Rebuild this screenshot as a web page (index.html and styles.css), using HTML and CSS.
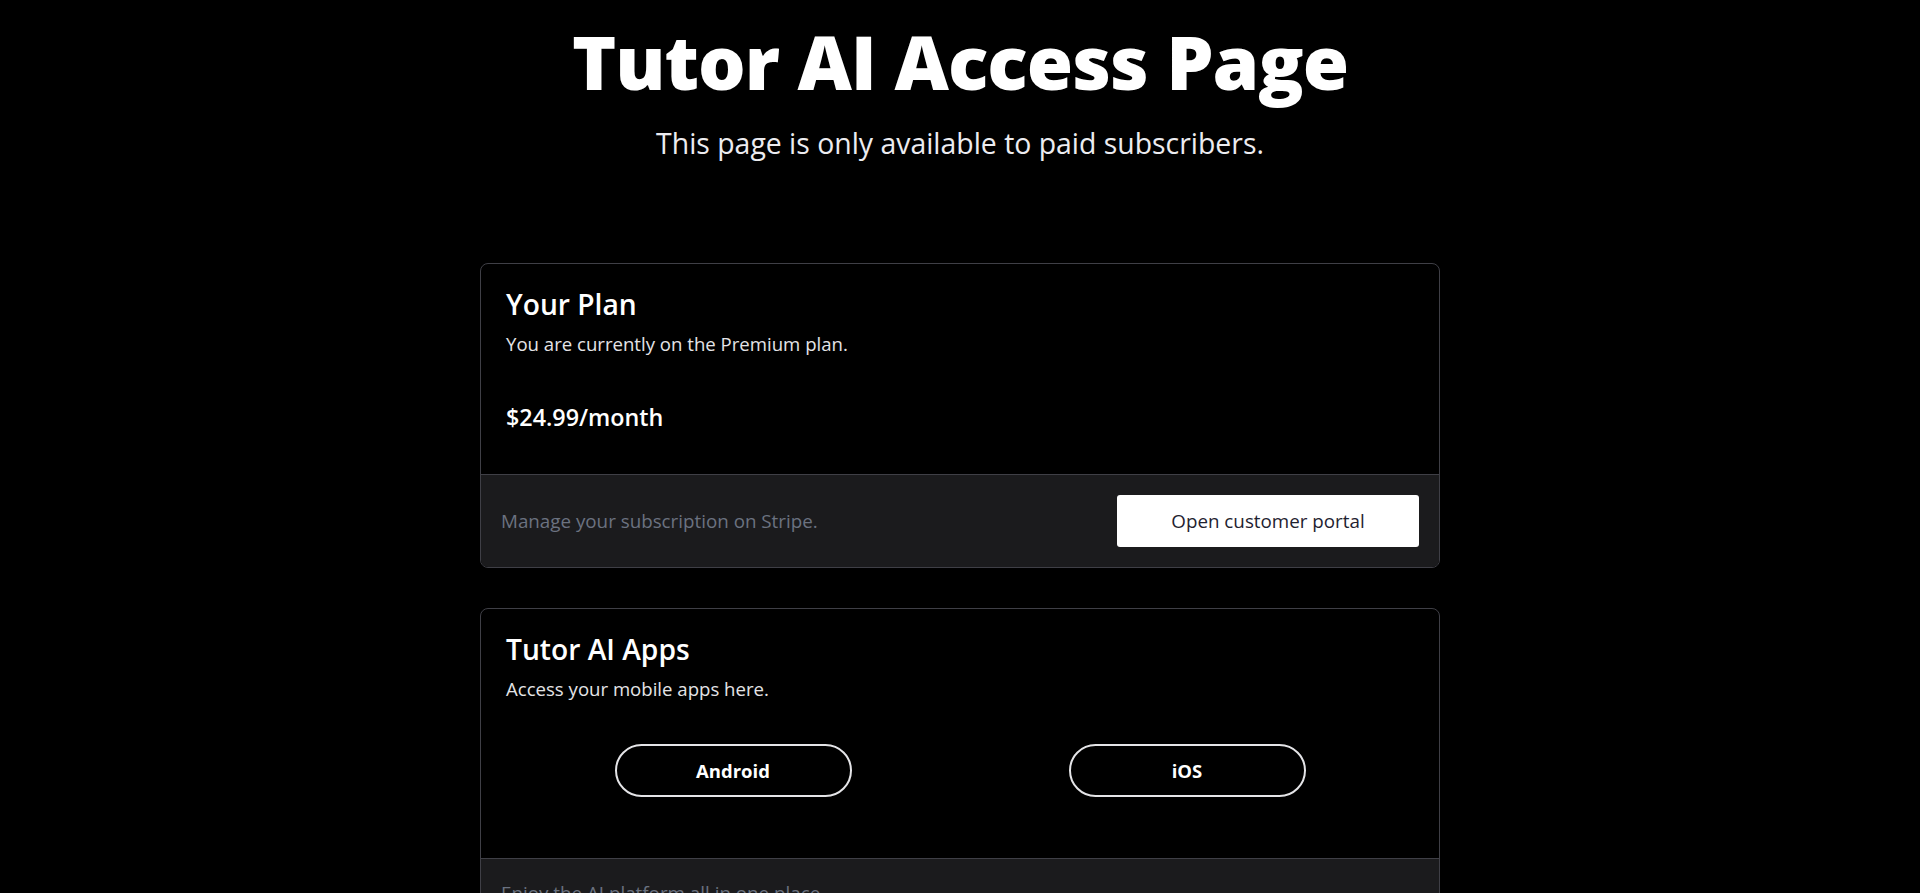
FILE: index.html
```html
<!DOCTYPE html>
<html lang="en">
<head>
<meta charset="utf-8">
<title>Tutor AI Access Page</title>
<link rel="stylesheet" href="styles.css">
</head>
<body>
<main class="page">
  <header class="hero">
    <h1 class="title">Tutor AI Access Page</h1>
    <p class="subtitle">This page is only available to paid subscribers.</p>
  </header>

  <section class="card">
    <div class="card-body">
      <h2 class="card-title">Your Plan</h2>
      <p class="card-desc">You are currently on the Premium plan.</p>
      <p class="price">$24.99/month</p>
    </div>
    <div class="card-footer">
      <span class="footer-text">Manage your subscription on Stripe.</span>
      <button class="portal-btn" type="button">Open customer portal</button>
    </div>
  </section>

  <section class="card">
    <div class="card-body">
      <h2 class="card-title">Tutor AI Apps</h2>
      <p class="card-desc">Access your mobile apps here.</p>
      <div class="apps">
        <div class="app-cell"><button class="pill-btn" type="button">Android</button></div>
        <div class="app-cell"><button class="pill-btn" type="button">iOS</button></div>
      </div>
    </div>
    <div class="card-footer">
      <span class="footer-text">Enjoy the AI platform all in one place.</span>
    </div>
  </section>
</main>
</body>
</html>
```

FILE: styles.css
```css
* { box-sizing: border-box; }

html, body {
  margin: 0;
  padding: 0;
  background: #000;
}

body {
  font-family: "Open Sans", "Noto Sans", "Liberation Sans", sans-serif;
  color: #fff;
}

.page {
  display: flex;
  flex-direction: column;
  align-items: center;
  padding-top: 24px;
}

.hero {
  display: flex;
  flex-direction: column;
  align-items: center;
}

.title {
  margin: 0;
  font-size: 75px;
  line-height: 75px;
  font-weight: 800;
  color: #fff;
  letter-spacing: -1px;
}

.subtitle {
  margin: 24px 0 0;
  font-size: 28.4px;
  line-height: 40px;
  font-weight: 400;
  color: #ececf0;
}

.card {
  width: 960px;
  border: 1px solid #3f3f46;
  border-radius: 8px;
  background: #000;
  overflow: hidden;
  margin-top: 100px;
}

.card + .card {
  margin-top: 40px;
}

.card-body {
  padding: 20px 25px 41px;
}

.card-title {
  margin: 0;
  font-size: 28.2px;
  line-height: 40px;
  font-weight: 600;
  color: #fff;
}

.card-desc {
  margin: 6px 0 0;
  font-size: 18.6px;
  line-height: 28px;
  color: #e4e4e7;
}

.price {
  margin: 43px 0 0;
  font-size: 23.3px;
  line-height: 32px;
  font-weight: 600;
  color: #fff;
}

.card-footer {
  display: flex;
  align-items: center;
  justify-content: space-between;
  padding: 20px 20px;
  background: #1b1b1d;
  border-top: 1px solid #3f3f46;
}

.footer-text {
  font-size: 18.8px;
  line-height: 28px;
  color: #6b7280;
}

.portal-btn {
  width: 302px;
  height: 52px;
  border: none;
  border-radius: 3px;
  background: #fff;
  color: #1f2230;
  font-family: inherit;
  font-size: 18.8px;
  font-weight: 500;
}

.apps {
  display: grid;
  grid-template-columns: 1fr 1fr;
  margin: 41px 0 20px;
}

.app-cell {
  display: flex;
  justify-content: center;
}

.pill-btn {
  width: 237px;
  height: 53px;
  border: 2px solid #e4e4e7;
  border-radius: 999px;
  background: #000;
  color: #fff;
  font-family: inherit;
  font-size: 18.5px;
  font-weight: 700;
}
```
